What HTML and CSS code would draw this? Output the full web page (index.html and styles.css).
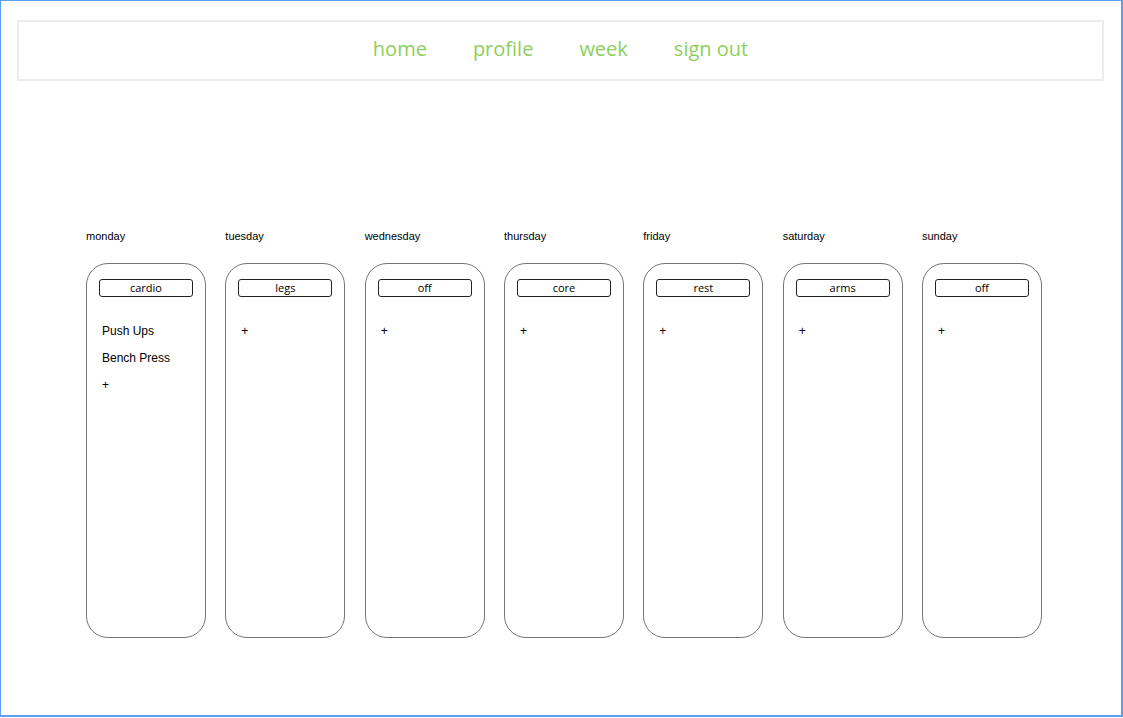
FILE: index.html
```html
<!DOCTYPE html>
<html>
<head>
<meta charset="utf-8">
<link rel="stylesheet" href="styles.css">
</head>
<body>
<div class="frame">
  <nav class="nav">
    <a class="nav-link" href="#">home</a>
    <a class="nav-link" href="#">profile</a>
    <a class="nav-link" href="#">week</a>
    <a class="nav-link" href="#">sign out</a>
  </nav>
  <div class="week">
    <div class="day">
      <div class="day-label">monday</div>
      <div class="card">
        <div class="tag">cardio</div>
        <ul class="items">
          <li>Push Ups</li>
          <li>Bench Press</li>
          <li>+</li>
        </ul>
      </div>
    </div>
    <div class="day">
      <div class="day-label">tuesday</div>
      <div class="card">
        <div class="tag">legs</div>
        <ul class="items"><li>+</li></ul>
      </div>
    </div>
    <div class="day">
      <div class="day-label">wednesday</div>
      <div class="card">
        <div class="tag">off</div>
        <ul class="items"><li>+</li></ul>
      </div>
    </div>
    <div class="day">
      <div class="day-label">thursday</div>
      <div class="card">
        <div class="tag">core</div>
        <ul class="items"><li>+</li></ul>
      </div>
    </div>
    <div class="day">
      <div class="day-label">friday</div>
      <div class="card">
        <div class="tag">rest</div>
        <ul class="items"><li>+</li></ul>
      </div>
    </div>
    <div class="day">
      <div class="day-label">saturday</div>
      <div class="card">
        <div class="tag">arms</div>
        <ul class="items"><li>+</li></ul>
      </div>
    </div>
    <div class="day">
      <div class="day-label">sunday</div>
      <div class="card">
        <div class="tag">off</div>
        <ul class="items"><li>+</li></ul>
      </div>
    </div>
  </div>
</div>
</body>
</html>
```
FILE: styles.css
```css
* { box-sizing: border-box; }

html, body {
  margin: 0;
  padding: 0;
  background: #ffffff;
}

.frame {
  width: 1123px;
  height: 717px;
  border-style: solid;
  border-color: #5e9eee;
  border-width: 1px 2px 2px 1px;
  padding: 19px 17px 0 16px;
  font-family: "Liberation Sans", Arial, sans-serif;
  color: #000;
}

.nav {
  height: 61px;
  border: 2px solid #ececec;
  display: flex;
  justify-content: center;
  align-items: flex-start;
  gap: 46px;
  padding-top: 13px;
}

.nav-link {
  font-family: "Open Sans", sans-serif;
  font-size: 20px;
  line-height: 27px;
  color: #8dcf5c;
  text-decoration: none;
}

.week {
  display: flex;
  gap: 19.33px;
  margin-top: 149px;
  padding-left: 69px;
}

.day {
  width: 120px;
  display: flex;
  flex-direction: column;
}

.day-label {
  font-size: 11px;
  line-height: 13px;
  height: 13px;
  margin-bottom: 20px;
}

.card {
  height: 375px;
  border: 1px solid #747474;
  border-radius: 22px;
  padding-top: 15px;
}

.tag {
  width: 94px;
  height: 18px;
  margin-left: 12px;
  border: 1px solid #222222;
  border-radius: 3px;
  font-family: "Open Sans", sans-serif;
  font-size: 11px;
  line-height: 16px;
  text-align: center;
}

.items {
  list-style: none;
  margin: 21px 0 0 0;
  padding: 0 0 0 15px;
}

.items li {
  font-size: 12px;
  line-height: 27px;
}
```
